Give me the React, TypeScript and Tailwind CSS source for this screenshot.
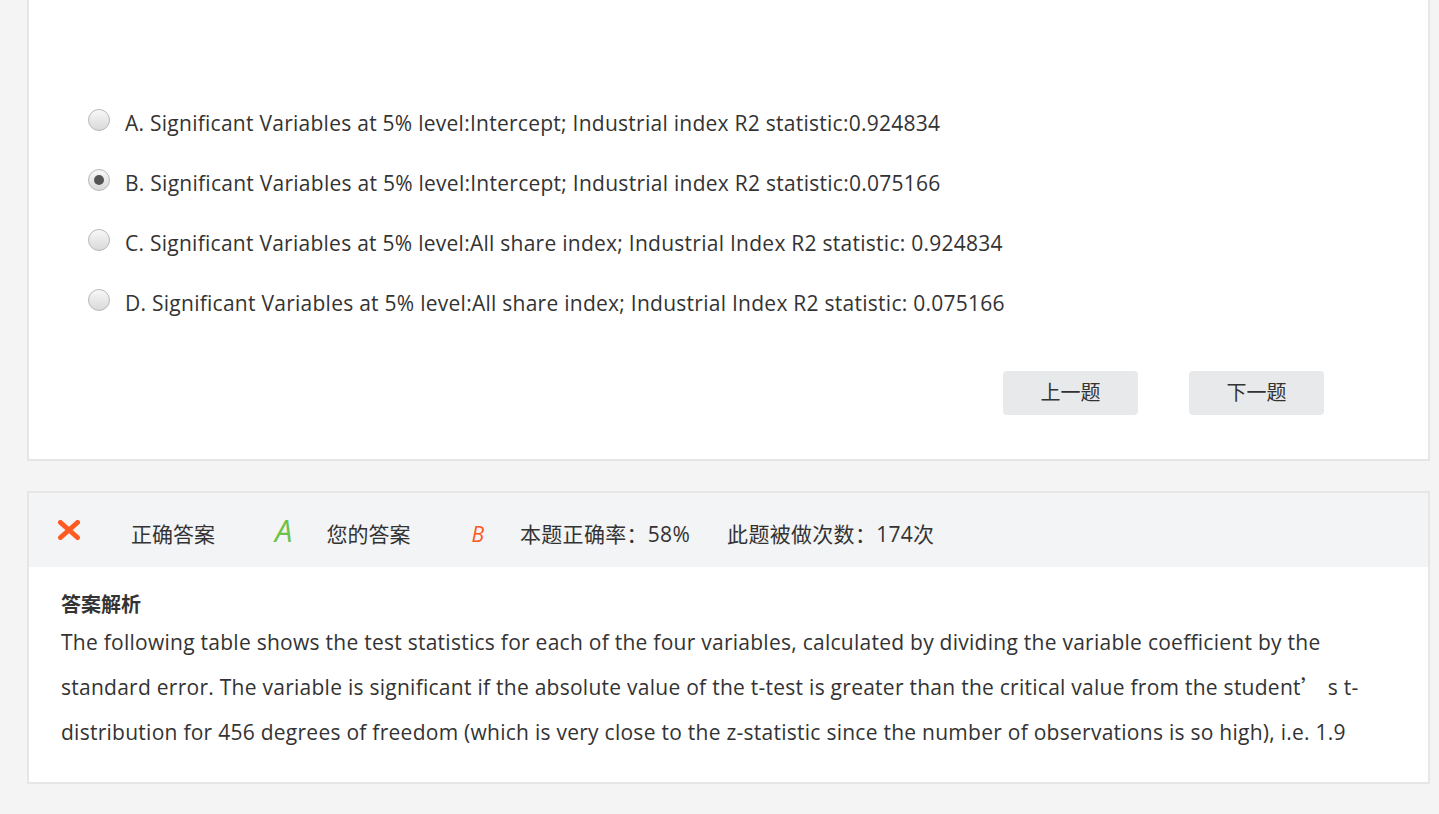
import React from "react";

const options = [
  { key: "A", text: "A. Significant Variables at 5% level:Intercept; Industrial index R2 statistic:0.924834" },
  { key: "B", text: "B. Significant Variables at 5% level:Intercept; Industrial index R2 statistic:0.075166" },
  { key: "C", text: "C. Significant Variables at 5% level:All share index; Industrial Index R2 statistic: 0.924834" },
  { key: "D", text: "D. Significant Variables at 5% level:All share index; Industrial Index R2 statistic: 0.075166" },
];

const font = { fontFamily: '"Open Sans", "Noto Sans CJK SC", sans-serif' };
const cjk = { fontFamily: '"Noto Sans CJK SC", sans-serif' };

function Radio({ checked }: { checked?: boolean }) {
  return (
    <span className="flex h-[22px] w-[22px] shrink-0 items-center justify-center rounded-full border border-[#b8b8b8] bg-gradient-to-b from-[#f8f8f8] to-[#d9d9d9]">
      {checked && <span className="h-[10px] w-[10px] rounded-full bg-[#555]" />}
    </span>
  );
}

function CrossIcon() {
  return (
    <svg width="24" height="20" viewBox="0 0 24 20">
      <path d="M3.5 2.5 L20.5 17.5 M20.5 2.5 L3.5 17.5" stroke="#ff5b22" strokeWidth="5" strokeLinecap="round" />
    </svg>
  );
}

export default function App() {
  return (
    <div className="min-h-screen bg-[#f4f4f4] pl-[27px] pr-[9px] pb-8 text-[#333]" style={font}>
      {/* question card */}
      <div className="border-2 border-t-0 border-[#e6e6e6] bg-white">
        <div className="pl-[59px] pt-[94px]">
          {options.map((o) => (
            <div key={o.key} className="flex h-[60px] items-center gap-[15px]">
              <span className="-mt-[8px]">
                <Radio checked={o.key === "B"} />
              </span>
              <span className="text-[21px] tracking-[0.26px]">{o.text}</span>
            </div>
          ))}
        </div>
        <div className="flex justify-end gap-[51px] pr-[104px] pt-[37px] pb-[44px]">
          <button className="h-[44px] w-[135px] rounded-[4px] bg-[#e8e9eb] text-[20px] text-[#333]">上一题</button>
          <button className="h-[44px] w-[135px] rounded-[4px] bg-[#e8e9eb] text-[20px] text-[#333]">下一题</button>
        </div>
      </div>

      {/* answer card */}
      <div className="mt-[30px] border-2 border-[#e6e6e6] bg-white">
        <div className="flex h-[74px] items-center bg-[#f3f4f5] pl-[28px] pt-[9px] text-[21px]">
          <span className="-mt-[9px]">
            <CrossIcon />
          </span>
          <span className="ml-[50px]">正确答案</span>
          <span className="ml-[60px] -mt-[8px] text-[31px] italic text-[#6cc24a]">A</span>
          <span className="ml-[34px]">您的答案</span>
          <span className="ml-[61px] text-[21px] italic text-[#ff5722]">B</span>
          <span className="ml-[36px] tracking-[0.3px]">本题正确率：58%</span>
          <span className="ml-[37px] tracking-[0.3px]">此题被做次数：174次</span>
        </div>
        <div className="pl-[32px] pr-[40px] pt-[23px] pb-[27px]">
          <div className="text-[20px] font-bold leading-[30px]">答案解析</div>
          <p className="text-[21px] leading-[45px] tracking-[0.26px]">
            The following table shows the test statistics for each of the four variables, calculated by dividing the variable coefficient by the standard error. The variable is significant if the absolute value of the t-test is greater than the critical value from the student<span className="leading-[0]" style={cjk}>’</span> s t-distribution for 456 degrees of freedom (which is very close to the z-statistic since the number of observations is so high), i.e. 1.9
          </p>
        </div>
      </div>
    </div>
  );
}
